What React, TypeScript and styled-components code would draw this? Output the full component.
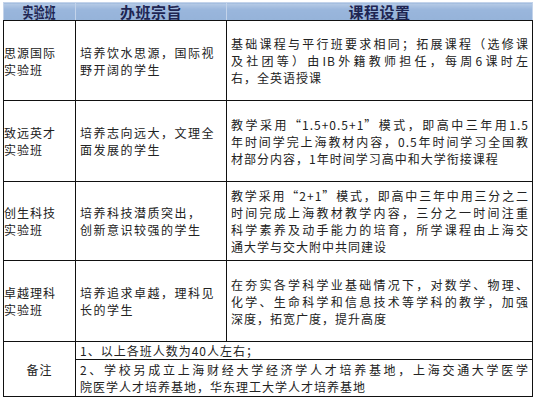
import * as React from 'react';
import styled, { createGlobalStyle } from 'styled-components';

const GlobalStyle = createGlobalStyle`
  html, body {
    margin: 0;
    padding: 0;
    background: #ffffff;
  }
  body {
    font-family: "Noto Sans CJK SC", "Liberation Sans", sans-serif;
    color: #222222;
  }
`;

const Page = styled.div`
  padding: 2px 0 0 3px;
`;

const Table = styled.table`
  border-collapse: collapse;
  table-layout: fixed;
  width: 529px;
  font-size: 12px;
`;

const HeadRow = styled.tr`
  height: 18px;
`;

const HeadCell = styled.th`
  padding: 0;
  height: 17px;
  background: linear-gradient(#b7cbe6 0%, #9ab6dc 35%, #95b3d9 100%);
  border: 1px solid #c3d3ea;
  border-bottom: 1px solid #111111;
  color: #1e2552;
  font-size: 15px;
  font-weight: 600;
  line-height: 17px;
  text-align: center;
  letter-spacing: 0.5px;
  overflow: visible;
  vertical-align: middle;
`;

interface SqueezeProps {
  $squeeze?: boolean;
}
const HeadText = styled.span<SqueezeProps>`
  display: inline-block;
  height: 17px;
  line-height: 17px;
  transform: ${(p) => (p.$squeeze ? 'scaleX(0.72)' : 'none')};
`;

interface RowProps {
  $h: number;
}
const Row = styled.tr<RowProps>`
  height: ${(p) => p.$h}px;
`;

interface CellProps {
  $pad?: string;
}
const Cell = styled.td<CellProps>`
  border: 1px solid #111111;
  padding: ${(p) => p.$pad || '0 3px 0 4px'};
  vertical-align: middle;
  line-height: 17px;
  letter-spacing: 1.5px;
`;

const NameCell = styled(Cell)`
  text-align: center;
  letter-spacing: 1px;
  padding: 0;
`;

interface LineProps {
  $full?: boolean;
}
const Line = styled.div<LineProps>`
  white-space: nowrap;
  text-align: ${(p) => (p.$full ? 'justify' : 'left')};
  text-align-last: ${(p) => (p.$full ? 'justify' : 'left')};
`;

const CourseCell = styled(Cell)`
  letter-spacing: 1px;
  padding: 0 3px 0 4px;
`;

interface Program {
  name: string[];
  aim: string[];
  course: string[];
  h: number;
}

const programs: Program[] = [
  {
    name: ['思源国际', '实验班'],
    aim: ['培养饮水思源，国际视', '野开阔的学生'],
    course: [
      '基础课程与平行班要求相同；拓展课程（选修课',
      '及社团等）由IB外籍教师担任，每周6课时左',
      '右，全英语授课',
    ],
    h: 80,
  },
  {
    name: ['致远英才', '实验班'],
    aim: ['培养志向远大，文理全', '面发展的学生'],
    course: [
      '教学采用“1.5+0.5+1”模式，即高中三年用1.5',
      '年时间学完上海教材内容，0.5年时间学习全国教',
      '材部分内容，1年时间学习高中和大学衔接课程',
    ],
    h: 81,
  },
  {
    name: ['创生科技', '实验班'],
    aim: ['培养科技潜质突出，', '创新意识较强的学生'],
    course: [
      '教学采用“2+1”模式，即高中三年中用三分之二',
      '时间完成上海教材教学内容，三分之一时间注重',
      '科学素养及动手能力的培育，所学课程由上海交',
      '通大学与交大附中共同建设',
    ],
    h: 79,
  },
  {
    name: ['卓越理科', '实验班'],
    aim: ['培养追求卓越，理科见', '长的学生'],
    course: [
      '在夯实各学科学业基础情况下，对数学、物理、',
      '化学、生命科学和信息技术等学科的教学，加强',
      '深度，拓宽广度，提升高度',
    ],
    h: 81,
  },
];

const Lines = ({ lines, justify }: { lines: string[]; justify?: boolean }) => (
  <>
    {lines.map((l, i) => (
      <Line key={i} $full={justify && i < lines.length - 1}>
        {l}
      </Line>
    ))}
  </>
);

export default function App() {
  return (
    <Page>
      <GlobalStyle />
      <Table>
        <colgroup>
          <col style={{ width: 72 }} />
          <col style={{ width: 151 }} />
          <col style={{ width: 306 }} />
        </colgroup>
        <tbody>
          <HeadRow>
            <HeadCell>
              <HeadText $squeeze>实验班</HeadText>
            </HeadCell>
            <HeadCell>
              <HeadText>办班宗旨</HeadText>
            </HeadCell>
            <HeadCell>
              <HeadText>课程设置</HeadText>
            </HeadCell>
          </HeadRow>
          {programs.map((p) => (
            <Row key={p.name[0]} $h={p.h}>
              <NameCell>
                <Lines lines={p.name} />
              </NameCell>
              <Cell>
                <Lines lines={p.aim} />
              </Cell>
              <CourseCell>
                <Lines lines={p.course} justify />
              </CourseCell>
            </Row>
          ))}
          <Row $h={18}>
            <NameCell rowSpan={2}>备注</NameCell>
            <CourseCell colSpan={2} $pad="0 3px 0 25px">
              <Line>1、以上各班人数为40人左右；</Line>
            </CourseCell>
          </Row>
          <Row $h={37}>
            <CourseCell colSpan={2} $pad="0 3px 0 25px">
              <Lines
                lines={[
                  '2、学校另成立上海财经大学经济学人才培养基地，上海交通大学医学',
                  '院医学人才培养基地，华东理工大学人才培养基地',
                ]}
                justify
              />
            </CourseCell>
          </Row>
        </tbody>
      </Table>
    </Page>
  );
}
